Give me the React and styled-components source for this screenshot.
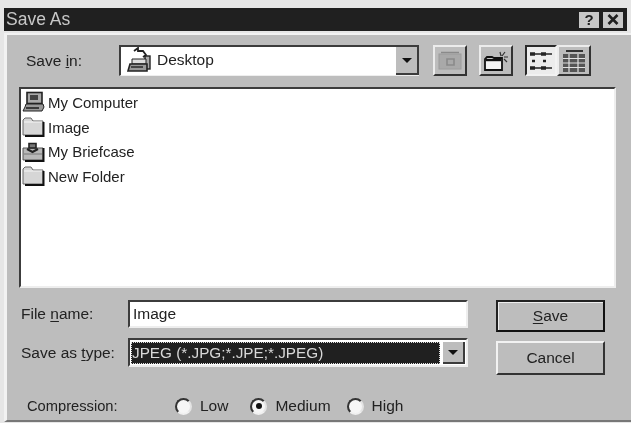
import styled, { createGlobalStyle } from "styled-components";

const GlobalStyle = createGlobalStyle`
  html, body {
    margin: 0;
    padding: 0;
    background: #e6e6e6;
  }
  * {
    box-sizing: border-box;
  }
`;

const Page = styled.div`
  width: 631px;
  height: 423px;
  padding: 8px 0 0 4px;
  overflow: hidden;
  filter: blur(0.75px);
  font-family: "Liberation Sans", Arial, sans-serif;
  font-size: 15.5px;
  color: #222;
`;

const TitleBar = styled.div`
  height: 23px;
  width: 623px;
  background: #202020;
  color: #c8c8c8;
  display: flex;
  align-items: center;
  justify-content: space-between;
  padding: 0 4px 0 2px;
  font-size: 17.5px;
`;

const TitleButtons = styled.div`
  display: flex;
  gap: 4px;
`;

const TitleButton = styled.div`
  width: 20px;
  height: 16px;
  background: #c8c8c8;
  color: #202020;
  font-weight: bold;
  font-size: 15px;
  line-height: 16px;
  display: flex;
  align-items: center;
  justify-content: center;
`;

const Body = styled.div`
  height: 389px;
  margin-top: 2px;
  background: #bdbdbd;
  border-top: 2px solid #f2f2f2;
  border-left: 3px solid #f2f2f2;
  border-bottom: 2px solid #777;
  padding: 10px 15px 0 12px;
`;

const SaveInRow = styled.div`
  display: flex;
  align-items: center;
  height: 31px;
`;

const SaveInLabel = styled.label`
  width: 100px;
  padding-left: 7px;
`;

const Combo = styled.div`
  width: 300px;
  height: 31px;
  display: flex;
  align-items: center;
  justify-content: space-between;
  background: #fff;
  border-top: 2px solid #3c3c3c;
  border-left: 2px solid #3c3c3c;
  border-bottom: 1px solid #eee;
  padding-left: 6px;
`;

const ComboValue = styled.div`
  display: flex;
  align-items: center;
  gap: 4px;
  flex: 1;
  margin-top: -2px;
`;

const ArrowButton = styled.div`
  width: ${(p) => p.$w || 23}px;
  height: 100%;
  background: #bdbdbd;
  border-right: 2px solid #3c3c3c;
  border-bottom: 2px solid #3c3c3c;
  display: flex;
  align-items: center;
  justify-content: center;

  &::after {
    content: "";
    border-left: 5px solid transparent;
    border-right: 5px solid transparent;
    border-top: 5px solid #111;
  }
`;

const Tools = styled.div`
  display: flex;
  margin-left: 14px;
`;

const ToolButton = styled.div`
  width: ${(p) => (p.$pressed ? 32 : 34)}px;
  height: 31px;
  margin-left: ${(p) => p.$gap || 0}px;
  display: flex;
  align-items: center;
  justify-content: center;
  background: ${(p) => (p.$pressed ? "#ececec" : "#bdbdbd")};
  border-style: solid;
  border-width: 2px;
  border-color: ${(p) =>
    p.$pressed
      ? "#2a2a2a #f2f2f2 #f2f2f2 #2a2a2a"
      : "#ececec #333 #333 #ececec"};
`;

const FileList = styled.div`
  width: 597px;
  height: 201px;
  margin-top: 11px;
  background: #fff;
  border-top: 2px solid #3c3c3c;
  border-left: 2px solid #3c3c3c;
  border-right: 2px solid #eee;
  border-bottom: 2px solid #eee;
  padding: 1px 0 0 1px;
  font-size: 15px;
`;

const FileRow = styled.div`
  height: 24.7px;
  display: flex;
  align-items: center;
  gap: 3px;
`;

const Form = styled.div`
  display: flex;
  margin-top: 12px;
`;

const Fields = styled.div`
  display: flex;
  flex-direction: column;
  gap: 10px;
`;

const Field = styled.div`
  display: flex;
  align-items: center;
`;

const FieldLabel = styled.label`
  width: 109px;
  padding-left: 2px;

  u {
    text-underline-offset: 2px;
  }
`;

const NameInput = styled.div`
  width: 340px;
  height: 28px;
  background: #fff;
  border-top: 2px solid #3c3c3c;
  border-left: 2px solid #3c3c3c;
  border-right: 2px solid #eee;
  border-bottom: 2px solid #eee;
  padding-left: 3px;
  line-height: 24px;
`;

const TypeSelect = styled.div`
  width: 340px;
  height: 29px;
  display: flex;
  background: #fff;
  border-top: 2px solid #3c3c3c;
  border-left: 2px solid #3c3c3c;
  border-right: 2px solid #eee;
  border-bottom: 2px solid #eee;
  padding: 2px 1px 1px 1px;
`;

const TypeValue = styled.div`
  flex: 1;
  background: #202020;
  color: #d8d8d8;
  font-size: 15.3px;
  line-height: 22px;
  padding-left: 1px;
  outline: 1px dotted #ddd;
  outline-offset: -1px;
  margin-right: 3px;
  white-space: nowrap;
  overflow: hidden;
`;

const Buttons = styled.div`
  display: flex;
  flex-direction: column;
  gap: 9px;
  margin-left: 28px;
`;

const PushButton = styled.div`
  width: 109px;
  height: ${(p) => (p.$default ? 32 : 34)}px;
  display: flex;
  align-items: center;
  justify-content: center;
  background: #bdbdbd;
  border-style: solid;
  border-width: 2px;
  border-color: ${(p) =>
    p.$default ? "#222 #111 #111 #222" : "#f2f2f2 #333 #333 #f2f2f2"};
  box-shadow: ${(p) => (p.$default ? "inset 1px 1px 0 #eee" : "none")};

  u {
    text-underline-offset: 2px;
  }
`;

const CompressionRow = styled.div`
  display: flex;
  align-items: center;
  margin-top: 22px;
`;

const CompressionLabel = styled.span`
  width: 156px;
  padding-left: 8px;
  font-size: 14.7px;
`;

const RadioOption = styled.div`
  display: flex;
  align-items: center;
  gap: 8px;
  margin-right: ${(p) => p.$after}px;
`;

const RadioMark = styled.span`
  width: 17px;
  height: 17px;
  border-radius: 50%;
  background: #f6f6f6;
  border: 2px solid;
  border-color: #333 #e4e4e4 #f0f0f0 #333;
  display: flex;
  align-items: center;
  justify-content: center;

  &::after {
    content: "";
    width: 6px;
    height: 6px;
    border-radius: 50%;
    background: ${(p) => (p.$checked ? "#111" : "transparent")};
  }
`;

const CloseIcon = () => (
  <svg width="12" height="11" viewBox="0 0 12 11">
    <path d="M1.5 1l9 9M10.5 1l-9 9" stroke="#202020" strokeWidth="2.6" />
  </svg>
);

const FolderIcon = () => (
  <svg width="23" height="20" viewBox="0 0 23 20">
    <path d="M1 18V3l2-2h6l2 3h10v14z" fill="#d6d6d6" stroke="#666" />
    <path d="M2 5h18" stroke="#f6f6f6" />
    <path d="M21.5 5v14H3" fill="none" stroke="#111" strokeWidth="2" />
  </svg>
);

const ComputerIcon = () => (
  <svg width="23" height="23" viewBox="0 0 23 23">
    <rect x="5" y="1.5" width="15" height="11" fill="#aaa" stroke="#222" strokeWidth="1.6" />
    <rect x="8" y="4" width="8" height="5" fill="#444" />
    <path d="M4 13h17l1 3-2 4H1l2-4z" fill="#999" stroke="#222" />
    <path d="M4 17h13" stroke="#222" strokeWidth="1.6" />
  </svg>
);

const BriefcaseIcon = () => (
  <svg width="23" height="21" viewBox="0 0 23 21">
    <path d="M1 19V7h20v12z" fill="#b8b8b8" stroke="#555" />
    <path d="M21.5 7v13H3" fill="none" stroke="#111" strokeWidth="2" />
    <path d="M7 7V2.5h7V7z" fill="#777" stroke="#222" strokeWidth="1.6" />
    <path d="M5 8l5.5 3L16 8" fill="none" stroke="#222" strokeWidth="2" />
    <path d="M2 13h18" stroke="#777" />
  </svg>
);

const DesktopIcon = () => (
  <svg width="26" height="26" viewBox="0 0 26 26">
    <path d="M7 4l4-3v3h5l3 4-3 2" fill="none" stroke="#222" strokeWidth="1.8" />
    <rect x="18" y="9" width="5" height="13" fill="#aaa" stroke="#222" strokeWidth="1.4" />
    <path d="M5 12h14v5H5z" fill="#ddd" stroke="#222" />
    <path d="M3 17h17v7H1z" fill="#999" stroke="#222" strokeWidth="1.6" />
    <path d="M4 20h12" stroke="#222" strokeWidth="1.4" />
  </svg>
);

const UpIcon = () => (
  <svg width="24" height="21" viewBox="0 0 24 21">
    <rect x="1" y="4" width="22" height="15" fill="#a9a9a9" stroke="#9c9c9c" />
    <path d="M3 2.5h18M9 9h7v6H9z" fill="none" stroke="#8a8a8a" strokeWidth="1.6" />
  </svg>
);

const NewFolderIcon = () => (
  <svg width="26" height="22" viewBox="0 0 26 22">
    <path d="M2 20V9l2-2h5l2 1h8v12z" fill="#f4f4f4" stroke="#111" strokeWidth="1.8" />
    <path d="M3 10h15" stroke="#111" strokeWidth="2.4" />
    <path d="M17 2l1 4M22 2l-3 4M25 7h-4M24 12l-3-3" stroke="#333" fill="none" strokeWidth="1.2" />
  </svg>
);

const ListIcon = () => (
  <svg width="26" height="22" viewBox="0 0 26 22">
    <g stroke="#222" fill="none">
      <path d="M2 4h5M13 4h5" strokeWidth="3.4" />
      <path d="M7 4h6M18 4h6" strokeWidth="1.6" />
      <path d="M4 11h3M15 11h3" strokeWidth="2.6" />
      <path d="M2 18h5M13 18h5" strokeWidth="3.4" />
      <path d="M7 18h6M18 18h6" strokeWidth="1.6" />
    </g>
  </svg>
);

const DetailsIcon = () => (
  <svg width="26" height="24" viewBox="0 0 26 24">
    <path d="M5 2h17" stroke="#333" strokeWidth="2" />
    <rect x="2" y="5" width="22" height="18" fill="#555" />
    <path d="M2 9.5h22M2 14h22M2 18.5h22M8 5v18M17 5v18" stroke="#e0e0e0" strokeWidth="1.2" />
  </svg>
);

const files = [
  { name: "My Computer", Icon: ComputerIcon },
  { name: "Image", Icon: FolderIcon },
  { name: "My Briefcase", Icon: BriefcaseIcon },
  { name: "New Folder", Icon: FolderIcon },
];

export default function App() {
  return (
    <Page>
      <GlobalStyle />
      <TitleBar>
        <span>Save As</span>
        <TitleButtons>
          <TitleButton>?</TitleButton>
          <TitleButton>
            <CloseIcon />
          </TitleButton>
        </TitleButtons>
      </TitleBar>
      <Body>
        <SaveInRow>
          <SaveInLabel>
            Save <u>i</u>n:
          </SaveInLabel>
          <Combo>
            <ComboValue>
              <DesktopIcon />
              Desktop
            </ComboValue>
            <ArrowButton />
          </Combo>
          <Tools>
            <ToolButton>
              <UpIcon />
            </ToolButton>
            <ToolButton $gap={12}>
              <NewFolderIcon />
            </ToolButton>
            <ToolButton $gap={12} $pressed>
              <ListIcon />
            </ToolButton>
            <ToolButton>
              <DetailsIcon />
            </ToolButton>
          </Tools>
        </SaveInRow>
        <FileList>
          {files.map(({ name, Icon }) => (
            <FileRow key={name}>
              <Icon />
              {name}
            </FileRow>
          ))}
        </FileList>
        <Form>
          <Fields>
            <Field>
              <FieldLabel>
                File <u>n</u>ame:
              </FieldLabel>
              <NameInput>Image</NameInput>
            </Field>
            <Field>
              <FieldLabel>
                Save as <u>t</u>ype:
              </FieldLabel>
              <TypeSelect>
                <TypeValue>JPEG (*.JPG;*.JPE;*.JPEG)</TypeValue>
                <ArrowButton $w={22} />
              </TypeSelect>
            </Field>
          </Fields>
          <Buttons>
            <PushButton $default>
              <span>
                <u>S</u>ave
              </span>
            </PushButton>
            <PushButton>Cancel</PushButton>
          </Buttons>
        </Form>
        <CompressionRow>
          <CompressionLabel>Compression:</CompressionLabel>
          <RadioOption $after={22}>
            <RadioMark />
            Low
          </RadioOption>
          <RadioOption $after={16}>
            <RadioMark $checked />
            Medium
          </RadioOption>
          <RadioOption $after={0}>
            <RadioMark />
            High
          </RadioOption>
        </CompressionRow>
      </Body>
    </Page>
  );
}
